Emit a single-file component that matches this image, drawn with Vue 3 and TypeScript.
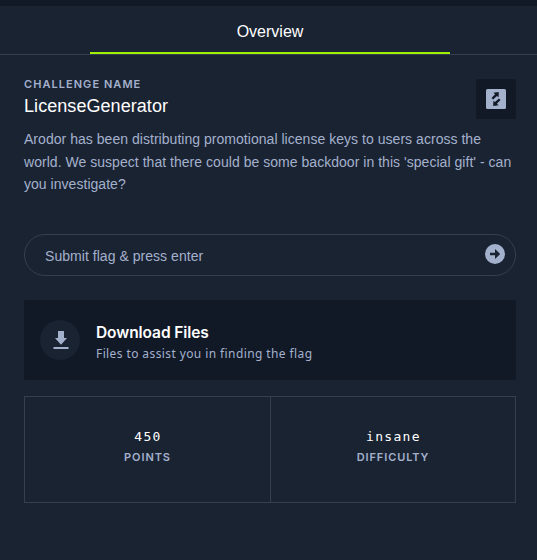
<script setup lang="ts">
interface Stat {
  value: string
  label: string
}

const description: string[] = [
  'Arodor has been distributing promotional license keys to users across the',
  "world. We suspect that there could be some backdoor in this 'special gift' - can",
  'you investigate?',
]

const stats: Stat[] = [
  { value: '450', label: 'POINTS' },
  { value: 'insane', label: 'DIFFICULTY' },
]
</script>

<template>
  <main class="panel">
    <nav class="tabs">
      <button class="tab" type="button"><span class="tab-label">Overview</span></button>
    </nav>

    <div class="content">
      <header class="heading">
        <div>
          <div class="eyebrow">CHALLENGE NAME</div>
          <h1 class="title">LicenseGenerator</h1>
        </div>
        <button class="expand" type="button" aria-label="Expand">
          <svg width="20" height="20" viewBox="0 0 20 20">
            <rect width="20" height="20" rx="1.5" fill="#a4b1cd" />
            <path d="M7.3 3.7 L12.8 3 L12.6 8.3 L11 7.1 L7.1 10.5 L5.5 8.9 L9.1 5.3Z" fill="#111927" />
            <path d="M12.7 16.3 L7.2 17 L7.4 11.7 L9 12.9 L12.9 9.5 L14.5 11.1 L10.9 14.7Z" fill="#111927" />
          </svg>
        </button>
      </header>

      <p class="description">
        <span v-for="(line, i) in description" :key="i" class="line">{{ line }}</span>
      </p>

      <div class="flag">
        <span class="placeholder">Submit flag &amp; press enter</span>
        <svg width="20" height="20" viewBox="0 0 20 20">
          <circle cx="10" cy="10" r="10" fill="#a4b1cd" />
          <path d="M5 8.7 H10 V5 L15.2 10 L10 15 V11.3 H5Z" fill="#1a2332" />
        </svg>
      </div>

      <section class="download">
        <div class="download-icon">
          <svg width="16" height="18" viewBox="0 0 16 18">
            <path d="M5 0 H11 V7 H14 L8 13.8 L2 7 H5Z" fill="#a4b1cd" />
            <rect x="0.5" y="16" width="15" height="2" fill="#a4b1cd" />
          </svg>
        </div>
        <div>
          <div class="download-title">Download Files</div>
          <div class="download-text">Files to assist you in finding the flag</div>
        </div>
      </section>

      <section class="stats">
        <div v-for="stat in stats" :key="stat.label" class="stat">
          <div class="value">{{ stat.value }}</div>
          <div class="label">{{ stat.label }}</div>
        </div>
      </section>
    </div>
  </main>
</template>

<style>
body {
  background: #1a2332;
}
</style>

<style scoped>
.panel {
  box-sizing: border-box;
  height: 560px;
  border-top: 6px solid #111927;
  background: #1a2332;
  color: #fff;
  font-family: 'Liberation Sans', Arial, sans-serif;
}
button {
  border: 0;
  padding: 0;
  font: inherit;
  color: inherit;
}
.tabs {
  box-sizing: border-box;
  height: 49px;
  padding-left: 90px;
  border-bottom: 1px solid #343f50;
}
.tab {
  box-sizing: border-box;
  display: block;
  width: 360px;
  height: 48px;
  padding-top: 6px;
  background: none;
  border-bottom: 2px solid #9fef00;
  font-size: 16px;
  line-height: 40px;
}
.content {
  padding: 24px 21px 0 24px;
}
.heading {
  display: flex;
  justify-content: space-between;
  height: 40px;
}
.eyebrow {
  font-family: Inter, sans-serif;
  font-size: 11px;
  font-weight: 600;
  line-height: 10px;
  letter-spacing: 1.05px;
  color: #a4b1cd;
}
.title {
  margin: 6px 0 0;
  font-size: 18px;
  font-weight: 400;
  line-height: 22px;
  letter-spacing: 0.06px;
}
.expand {
  display: flex;
  align-items: center;
  justify-content: center;
  width: 40px;
  height: 40px;
  border-radius: 2px;
  background: #111927;
}
.description {
  margin: 9px 0 0;
  font-size: 14px;
  line-height: 22.5px;
  letter-spacing: 0.035px;
  color: #a4b1cd;
}
.line {
  display: block;
  white-space: nowrap;
}
.flag {
  box-sizing: border-box;
  display: flex;
  align-items: center;
  justify-content: space-between;
  height: 42px;
  margin-top: 38px;
  padding: 0 10px 0 20px;
  border: 1px solid #343f50;
  border-radius: 21px;
  font-size: 14px;
  letter-spacing: 0.04px;
  color: #a4b1cd;
}
.flag svg {
  margin-bottom: 2px;
}
.placeholder {
  padding-top: 2px;
}
.download {
  box-sizing: border-box;
  display: flex;
  align-items: center;
  gap: 16px;
  height: 80px;
  margin-top: 24px;
  padding-left: 16px;
  border-radius: 2px;
  background: #111927;
}
.download-icon {
  display: flex;
  align-items: center;
  justify-content: center;
  width: 40px;
  height: 40px;
  border-radius: 50%;
  background: #1a2332;
}
.download-icon svg {
  margin-left: 1px;
}
.download-title {
  padding-top: 6px;
  font-family: Inter, sans-serif;
  font-size: 15.5px;
  font-weight: 600;
  line-height: 21px;
  letter-spacing: -0.08px;
}
.download-text {
  font-family: 'Noto Sans', sans-serif;
  font-size: 12px;
  line-height: 21px;
  letter-spacing: 0.4px;
  color: #a4b1cd;
}
.stats {
  box-sizing: border-box;
  display: grid;
  grid-template-columns: 246px 1fr;
  height: 107px;
  margin-top: 16px;
  border: 1px solid #343f50;
}
.stat {
  padding-top: 30px;
  text-align: center;
}
.stat:first-child {
  box-sizing: border-box;
  border-right: 1px solid #343f50;
}
.value {
  padding-left: 1px;
  font-family: 'DejaVu Sans Mono', monospace;
  font-size: 13px;
  line-height: 19px;
  letter-spacing: 1.3px;
}
.label {
  margin-top: 4px;
  font-family: Inter, sans-serif;
  font-size: 11px;
  font-weight: 600;
  line-height: 14px;
  letter-spacing: 0.9px;
  color: #a4b1cd;
}
</style>
